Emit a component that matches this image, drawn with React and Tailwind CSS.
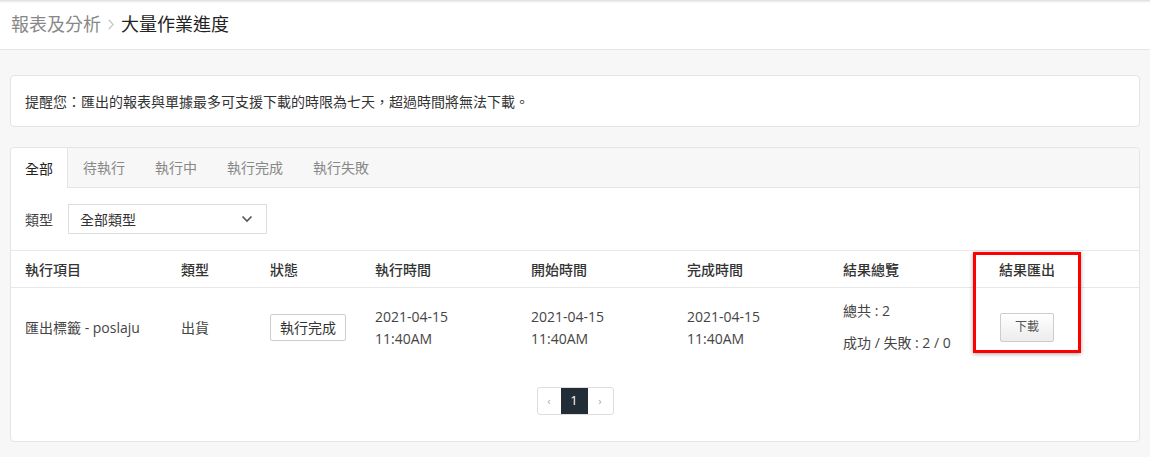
import React from "react"

const tabs = ["全部", "待執行", "執行中", "執行完成", "執行失敗"]

const cols = "grid grid-cols-[156px_89px_105px_156px_156px_156px_144px_108px_1fr]"

const Chevron = () => (
    <svg width="12" height="8" viewBox="0 0 12 8" fill="none">
        <path d="M1.5 1.5L6 6L10.5 1.5" stroke="#555" strokeWidth="1.6" />
    </svg>
)

const App = () => {
    return (
        <div className="min-h-screen bg-[#f7f7f7] font-['Open_Sans','Noto_Sans_CJK_TC',sans-serif] text-[#333]">
            <div className="h-[50px] bg-white border-b border-[#e6e6e6] shadow-[inset_0_3px_3px_-2px_rgba(0,0,0,0.18)] flex items-center px-[11px] text-[18px]">
                <span className="text-[#888]">報表及分析</span>
                <svg className="mx-[7px]" width="6" height="11" viewBox="0 0 6 11" fill="none">
                    <path d="M0.8 0.8L5 5.5L0.8 10.2" stroke="#bbb" strokeWidth="1.1" />
                </svg>
                <span className="text-[#222]">大量作業進度</span>
            </div>

            <div className="px-[10px] pt-[25px]">
                <div className="h-[52px] bg-white border border-[#e4e4e4] rounded-[4px] flex items-center pl-[14px] text-[14px] text-[#333]">
                    提醒您：匯出的報表與單據最多可支援下載的時限為七天，超過時間將無法下載。
                </div>

                <div className="mt-[20px] bg-white border border-[#e4e4e4] rounded-[4px] pb-[26px]">
                    <div className="h-[40px] bg-[#f7f7f7] border-b border-[#e4e4e4] flex rounded-t-[4px]">
                        {tabs.map((t, i) => (
                            <div
                                key={t}
                                className={
                                    i === 0
                                        ? "px-[14px] h-[40px] flex items-center bg-white border-r border-[#e4e4e4] text-[14px] text-[#222] rounded-tl-[4px]"
                                        : "px-[15px] h-full flex items-center text-[14px] text-[#888]"
                                }
                            >
                                {t}
                            </div>
                        ))}
                    </div>

                    <div className="flex items-center pl-[14px] pt-[16px]">
                        <span className="text-[14px] text-[#444] mr-[15px]">類型</span>
                        <div className="w-[199px] h-[30px] border border-[#ddd] flex items-center justify-between pl-[11px] pr-[13px] text-[14px] text-[#333]">
                            <span>全部類型</span>
                            <Chevron />
                        </div>
                    </div>

                    <div className="relative mt-[16px]">
                        <div className={`${cols} h-[38px] items-center border-t border-b border-[#e8e8e8] text-[14px] font-medium text-[#333]`}>
                            <div className="pl-[14px]">執行項目</div>
                            <div className="pl-[14px]">類型</div>
                            <div className="pl-[14px]">狀態</div>
                            <div className="pl-[14px]">執行時間</div>
                            <div className="pl-[14px]">開始時間</div>
                            <div className="pl-[14px]">完成時間</div>
                            <div className="pl-[14px]">結果總覽</div>
                            <div className="text-center">結果匯出</div>
                            <div></div>
                        </div>
                        <div className={`${cols} h-[78px] items-center text-[14px] text-[#444]`}>
                            <div className="pl-[14px]">匯出標籤 - poslaju</div>
                            <div className="pl-[14px]">出貨</div>
                            <div className="pl-[14px]">
                                <span className="inline-flex items-center h-[27px] px-[9px] border border-[#ccc] rounded-[2px] text-[#333]">執行完成</span>
                            </div>
                            <div className="pl-[14px] leading-[22px] pt-[2px]">
                                <div>2021-04-15</div>
                                <div>11:40AM</div>
                            </div>
                            <div className="pl-[14px] leading-[22px] pt-[2px]">
                                <div>2021-04-15</div>
                                <div>11:40AM</div>
                            </div>
                            <div className="pl-[14px] leading-[22px] pt-[2px]">
                                <div>2021-04-15</div>
                                <div>11:40AM</div>
                            </div>
                            <div className="pl-[14px] leading-[20px]">
                                <div>總共 : 2</div>
                                <div className="mt-[12px]">成功 / 失敗 : 2 / 0</div>
                            </div>
                            <div className="flex justify-center">
                                <span className="inline-flex items-center justify-center w-[54px] h-[29px] border border-[#ccc] rounded-[2px] bg-gradient-to-b from-white to-[#ececec] text-[12px] text-[#555]">下載</span>
                            </div>
                            <div></div>
                        </div>
                        <div className="absolute left-[962px] top-[2px] w-[108px] h-[101px] border-[3px] border-[#ff0000] shadow-[0_1px_4px_rgba(0,0,0,0.35)] pointer-events-none"></div>
                    </div>

                    <div className="flex justify-center mt-[21px]">
                        <div className="flex h-[28px] border border-[#ddd] rounded-[3px] text-[13px] overflow-hidden">
                            <div className="w-[23px] flex items-center justify-center text-[#aaa] text-[11px]">‹</div>
                            <div className="w-[27px] flex items-center justify-center bg-[#222d38] text-white">1</div>
                            <div className="w-[25px] flex items-center justify-center text-[#aaa] text-[11px]">›</div>
                        </div>
                    </div>
                </div>
            </div>
        </div>
    )
}

export default App
